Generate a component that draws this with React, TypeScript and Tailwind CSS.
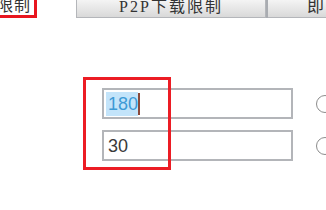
import React from "react";

export default function App() {
  return (
    <div className="relative w-[326px] h-[210px] overflow-hidden bg-white font-['Liberation_Sans','Noto_Sans_CJK_SC',sans-serif]">
      <div className="flex h-[18px]">
        <div className="shrink-0 -ml-[24px] w-[61px] h-[18px] border-[3px] border-t-0 border-[#e8161f] flex items-end justify-end pr-[3px] pb-[1px]">
          <span className="text-[16px] leading-none text-[#333] font-['Liberation_Serif','Noto_Sans_CJK_SC',serif] tracking-[1px]">限制</span>
        </div>
        <div className="shrink-0 ml-[39px] w-[190px] h-[18px] border border-t-0 border-[#b4b6ba] bg-gradient-to-b from-[#f4f4f4] to-[#d9d9d9] flex items-end justify-center pb-[2px]">
          <span className="text-[16px] leading-none text-[#333] font-['Liberation_Serif','Noto_Sans_CJK_SC',serif] tracking-[2px]">P2P下载限制</span>
        </div>
        <div className="shrink-0 w-[2px] h-[18px] bg-[#a9acb1]" />
        <div className="flex-1 h-[18px] border-b border-[#b4b6ba] bg-gradient-to-b from-[#f4f4f4] to-[#d9d9d9] flex items-end pl-[39px] pb-[2px]">
          <span className="text-[17px] leading-none text-[#333] font-['Liberation_Serif','Noto_Sans_CJK_SC',serif]">即</span>
        </div>
      </div>
      <div className="flex flex-col pl-[102px] pt-[70px] gap-[11px]">
        <div className="flex items-center">
          <div className="shrink-0 w-[191px] h-[31px] border-2 border-[#b3b5b9] bg-white flex items-center pl-[2px]">
            <span className="bg-[#c3e4fa] text-[#3d9ad6] text-[18px] leading-[24px] pl-[2px]">180</span>
            <span className="w-[2px] h-[22px] bg-[#8a4a3c]" />
          </div>
          <div className="shrink-0 ml-[23px] w-[18px] h-[18px] rounded-full border-[1.5px] border-[#8c8c8c]" />
        </div>
        <div className="flex items-center">
          <div className="shrink-0 w-[191px] h-[31px] border-2 border-[#b3b5b9] bg-white flex items-center pl-[4px]">
            <span className="text-[#3a3a3a] text-[18px] leading-[24px]">30</span>
          </div>
          <div className="shrink-0 ml-[23px] w-[18px] h-[18px] rounded-full border-[1.5px] border-[#8c8c8c]" />
        </div>
      </div>
      <div className="absolute left-[83px] top-[77px] w-[88px] h-[93px] border-[3px] border-[#ec1c24]" />
    </div>
  );
}
